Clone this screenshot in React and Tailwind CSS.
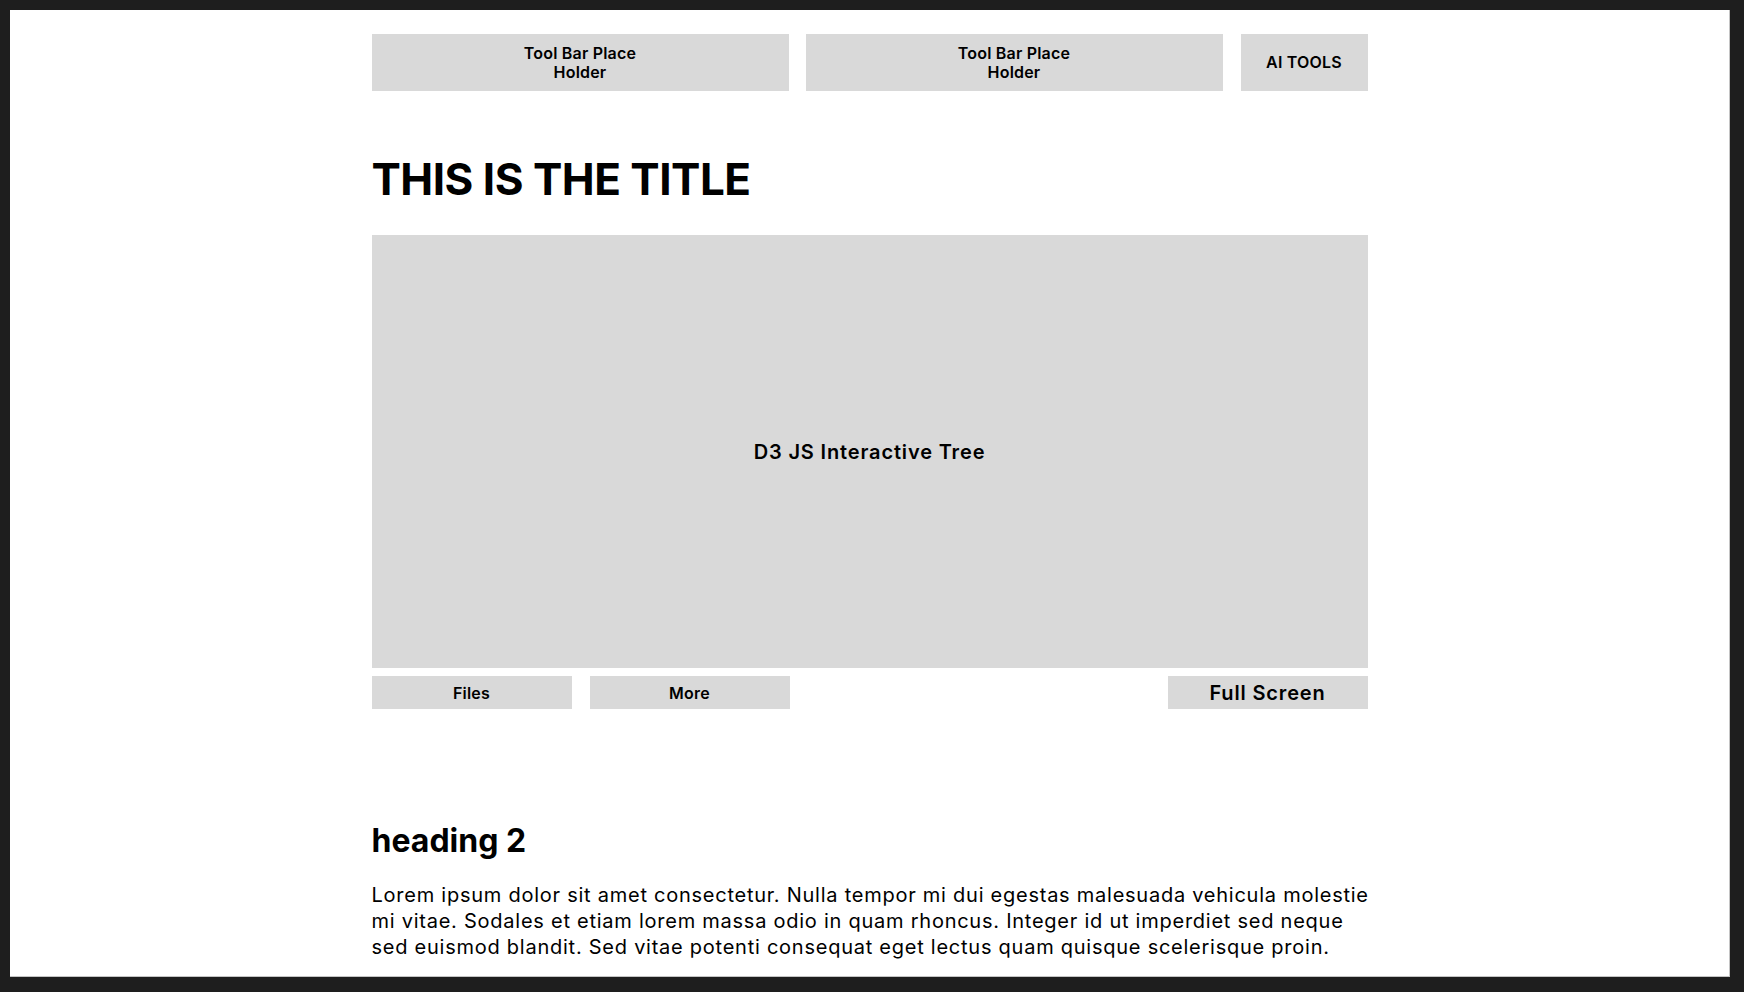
const ToolBox = ({ children, className = "" }) => {
    return (
        <div className={`h-[57px] bg-[#d9d9d9] flex items-center justify-center text-center text-[16px] leading-[19px] font-semibold tracking-[0.2px] text-black ${className}`}>
            {children}
        </div>
    )
}

const SmallButton = ({ children, className = "" }) => {
    return (
        <button className={`h-[33px] w-[200px] bg-[#d9d9d9] flex items-center justify-center font-semibold text-black ${className}`}>
            {children}
        </button>
    )
}

const App = () => {
    return (
        <div className="h-screen w-full bg-[#1e1e1e] pl-[10px] pt-[10px] pr-[14px] pb-[15px] flex flex-col" style={{ fontFamily: "Inter, 'Noto Sans', sans-serif" }}>

            <div className="flex-1 bg-white border-r border-b border-[#c4c4c4] overflow-hidden">

                <div className="w-[996px] mx-auto pt-[24px]">

                    {/* toolbar */}
                    <div className="flex flex-row gap-[17px]">
                        <ToolBox className="w-[417px]">
                            Tool Bar Place<br />Holder
                        </ToolBox>
                        <ToolBox className="w-[417px]">
                            Tool Bar Place<br />Holder
                        </ToolBox>
                        <ToolBox className="flex-1 ml-px">
                            AI TOOLS
                        </ToolBox>
                    </div>

                    <h1 className="mt-[62px] text-[44px] leading-[53px] font-bold tracking-[-0.5px] text-black">
                        THIS IS THE TITLE
                    </h1>

                    <div className="mt-[29px] h-[433px] bg-[#d9d9d9] flex items-center justify-center">
                        <p className="text-[20px] leading-[24px] font-semibold tracking-[0.85px] text-black">
                            D3 JS Interactive Tree
                        </p>
                    </div>

                    <div className="mt-[8px] flex flex-row gap-[18px]">
                        <SmallButton className="text-[16px] tracking-[0.2px]">Files</SmallButton>
                        <SmallButton className="text-[16px] tracking-[0.2px]">More</SmallButton>
                        <SmallButton className="ml-auto text-[20px] tracking-[0.85px]">Full Screen</SmallButton>
                    </div>

                    <h2 className="mt-[112px] text-[32px] leading-[39px] font-bold text-black">
                        heading 2
                    </h2>

                    <p className="mt-[22px] w-[1004px] text-[20px] leading-[26px] tracking-[0.75px] text-black">
                        Lorem ipsum dolor sit amet consectetur. Nulla tempor mi dui egestas malesuada vehicula molestie mi vitae. Sodales et etiam lorem massa odio in quam rhoncus. Integer id ut imperdiet sed neque sed euismod blandit. Sed vitae potenti consequat eget lectus quam quisque scelerisque proin.
                    </p>

                </div>
            </div>
        </div>
    )
}

export default App
